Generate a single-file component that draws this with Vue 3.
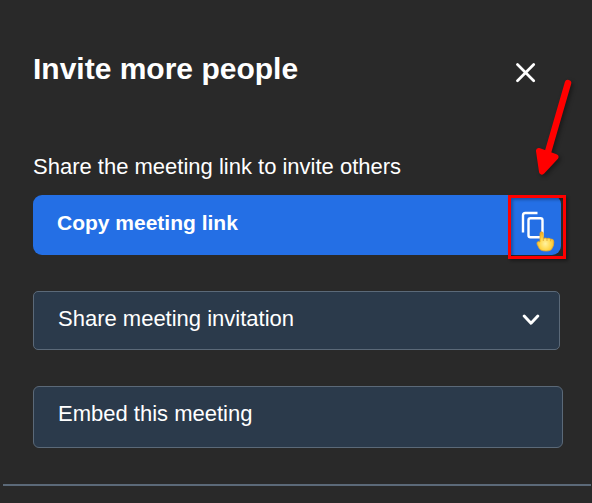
<script setup>
import { ref } from 'vue'

const open = ref(true)
const expanded = ref(false)
</script>

<template>
  <main v-if="open" class="dialog" role="dialog" aria-labelledby="dialog-title">
    <header class="header">
      <h1 id="dialog-title" class="title">Invite more people</h1>
      <button class="close" type="button" aria-label="Close" @click="open = false">
        <svg width="20" height="20" viewBox="0 0 20 20" aria-hidden="true">
          <path d="M1.5 1.5 17.7 17.7M17.7 1.5 1.5 17.7" fill="none" stroke="#fff" stroke-width="2.7" stroke-linecap="round" />
        </svg>
      </button>
    </header>

    <section class="content">
      <p class="hint">Share the meeting link to invite others</p>

      <div class="copy-row">
        <button class="field copy" type="button">
          <span>Copy meeting link</span>
          <svg class="copy-icon" width="24" height="28" viewBox="0 0 24 28" aria-hidden="true">
            <path d="M2 21.5V4.300Q2 2 4.300 2H16.5" fill="none" stroke="#fff" stroke-width="2.4" />
            <rect x="7.5" y="7.2" width="14" height="19" rx="2" fill="none" stroke="#fff" stroke-width="2.4" />
          </svg>
        </button>
        <span class="highlight" aria-hidden="true"></span>
        <svg class="arrow" width="44" height="108" viewBox="0 0 44 108" aria-hidden="true">
          <path d="M36 7 16 76" fill="none" stroke="#f00" stroke-width="6.5" stroke-linecap="round" />
          <path d="M7 75 23.500 81 10 95.500Z" fill="#f00" stroke="#f00" stroke-width="6" stroke-linejoin="round" />
        </svg>
        <svg class="hand" width="20" height="22" viewBox="0 0 20 22" aria-hidden="true">
          <defs>
            <radialGradient id="hand-fill" cx="50%" cy="62%" r="60%">
              <stop offset="0" stop-color="#fff2a0" />
              <stop offset=".55" stop-color="#ffd84c" />
              <stop offset="1" stop-color="#f3ae20" />
            </radialGradient>
          </defs>
          <path d="M4 11V2.500Q4 .8 5.600 .8T7.300 2.500V7.500Q9.500 6.600 11 7.500 13 6.800 14.600 8 17.800 7.600 17.800 11 17.800 15 16.200 17Q15.500 20 10 20 3.500 20 2.500 16L1 13Q.5 10.800 2.500 10.600Z" fill="url(#hand-fill)" stroke="#e9a92a" stroke-width=".8" stroke-linejoin="round" />
          <path d="M7.3 7.800V10M11 7.800V10M14.600 8.300V10.300" fill="none" stroke="#d89a2b" stroke-width=".7" />
        </svg>
      </div>

      <button class="field share" type="button" :aria-expanded="expanded" @click="expanded = !expanded">
        <span>Share meeting invitation</span>
        <svg width="18" height="12" viewBox="0 0 18 12" aria-hidden="true">
          <path d="M2.2 3 9 10.200 15.8 3" fill="none" stroke="#fff" stroke-width="2.9" stroke-linecap="round" stroke-linejoin="round" />
        </svg>
      </button>

      <button class="field embed" type="button">Embed this meeting</button>
    </section>

    <hr class="divider" />
  </main>
</template>

<style>
body {
  margin: 0;
  background: #292929;
}
</style>

<style scoped>
.dialog {
  color: #fff;
  font-family: "Liberation Sans", Arial, sans-serif;
  font-size: 22px;
  line-height: 26px;
}

.header {
  display: flex;
  justify-content: space-between;
  align-items: center;
  padding: 52px 52px 0 33px;
}

.title {
  margin: 0;
  font-size: 30px;
  line-height: 34px;
}

.close {
  display: flex;
  padding: 7px 4px 0;
  border: 0;
  background: none;
  cursor: pointer;
}

.content {
  display: flex;
  flex-direction: column;
  padding: 68px 29px 0 33px;
}

.hint {
  margin: 0 0 15px;
}

.copy-row {
  position: relative;
  display: flex;
  margin: 0 2px 36px 0;
}

.field {
  box-sizing: border-box;
  display: flex;
  flex: 1;
  justify-content: space-between;
  align-items: center;
  padding: 14px 19px 17px 24px;
  border: 1px solid #5b6978;
  border-radius: 5px;
  background: #2b3a4b;
  color: #fff;
  font: inherit;
  text-align: left;
  cursor: pointer;
}

.copy {
  padding: 14px 16px 18px 24px;
  border: 0;
  border-radius: 9px;
  background: #246fe5;
  font-size: 21px;
  font-weight: 700;
}

.copy-icon {
  margin: 2px 0 -2px;
}

.share {
  margin: 0 3px 36px 0;
}

.embed {
  padding: 14px 24px 20px;
  border-radius: 6px;
}

.highlight {
  position: absolute;
  top: 0;
  right: -5px;
  box-sizing: border-box;
  width: 58px;
  height: 64px;
  border: 3px solid #f00;
  box-shadow: 2px 2px 3px #0005, inset 2px 2px 3px #0004;
  pointer-events: none;
}

.arrow {
  position: absolute;
  top: -119px;
  right: -15px;
  filter: drop-shadow(2px 2px 2px #0006);
  pointer-events: none;
}

.hand {
  position: absolute;
  top: 36px;
  right: 5px;
  pointer-events: none;
}

.divider {
  height: 2px;
  margin: 36px 1px 0 3px;
  border: 0;
  background: #5b6978;
}
</style>
